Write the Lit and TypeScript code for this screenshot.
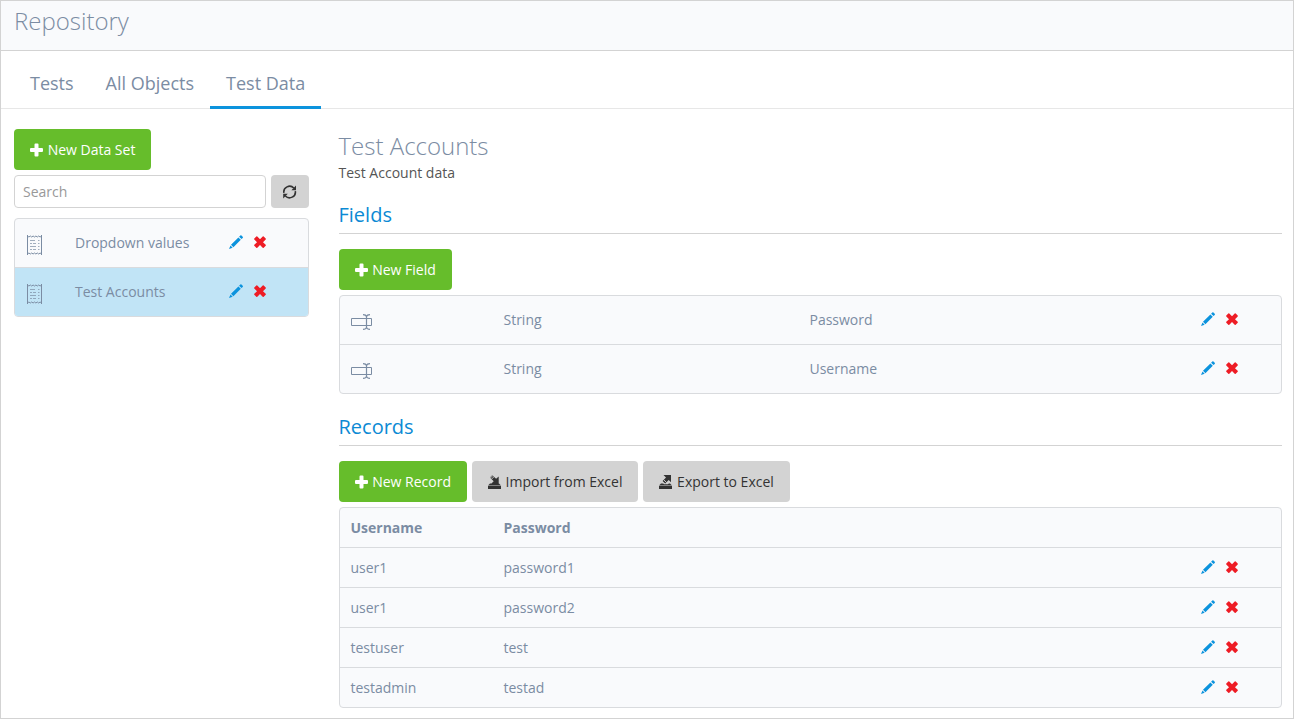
import { LitElement, html, svg, css, nothing } from "lit";
import { customElement, property, state } from "lit/decorators.js";

const icons = {
  plus: svg`<path fill="currentColor" d="M4.500 1.500q0-1 1-1h2q1 0 1 1V5h3.500q1 0 1 1v2q0 1-1 1H8.500v3.500q0 1-1 1h-2q-1 0-1-1V9H1q-1 0-1-1V6q0-1 1-1h3.500z"/>`,
  refresh: svg`<path fill="none" stroke="currentColor" stroke-width="1.600" d="M.9 7.800A5.800 5.600 0 0 1 10.800 3M12.300 6.200A5.800 5.600 0 0 1 2.400 11"/><path fill="currentColor" d="M13 .400v4.800H8.400zM.200 13.600V8.800h4.600z"/>`,
  pencil: svg`<path fill="currentColor" d="M11.300.500q.600-.600 1.200 0l1.200 1.200q.600.600 0 1.200l-1.200 1.200L10.100 1.700zM9.400 2.400l2.400 2.400-7.400 7.400L2 9.800zM1.500 10.500l2.200 2.200L0 14z"/>`,
  remove: svg`<path fill="currentColor" d="M1.300 3.500l2-2q.500-.400 1 0L7 4.200l2.700-2.700q.500-.400 1 0l2 2q.400.500 0 1L10 7.200l2.700 2.500q.400.500 0 1l-2 2q-.500.400-1 0L7 10.100l-2.700 2.600q-.500.400-1 0l-2-2q-.400-.500 0-1L4 7.200 1.300 4.500q-.400-.500 0-1z"/>`,
  importing: svg`<path fill="currentColor" d="M0 11h13v3H0zM2 8.500h9l2 2H0zM4.200.300l3.900 3.500L10.700 1.500v7H3.500L5.700 6.300 2 2.600z"/><path stroke="#d3d3d3" stroke-width=".900" d="M4.900 .500L2.300 3.100M6 1.700L3.500 4.200"/>`,
  exporting: svg`<path fill="currentColor" d="M0 11h13v3H0zM2 8.500h2.200l.8.700h4l.8-.7H11l2 2H0zM4.500 0H12v7.300L9.700 5 6.200 8.400 3.600 5.900 7 2.400z"/><path stroke="#d3d3d3" stroke-width=".900" d="M4.600 4.600l3 3"/>`,
};

const icon = (name: keyof typeof icons) =>
  html`<svg class="icon" viewBox="0 0 14 14" width="14" height="14" aria-hidden="true">${icons[name]}</svg>`;

const sheetIcon = html`<svg class="glyph" viewBox="0 0 15 20" width="15" height="20" aria-hidden="true">
  <path fill="none" stroke="currentColor" d="M.5 0v20M14.500 0v20M.5 1l1.400 1 1.400-1 1.400 1 1.400-1 1.400 1 1.400-1 1.400 1 1.400-1 1.400 1 1.400-1M.5 19l1.400-1 1.400 1 1.400-1 1.400 1 1.400-1 1.400 1 1.400-1 1.400 1 1.400-1 1.400 1"/>
  <path fill="none" stroke="currentColor" stroke-width=".7" d="M3 5.500h5M3 8.500h2M6 8.500h3M3 11.500h6M3 14.500h2M6 14.500h3M11 5.500h1.500M11 8.500h1.500M11 11.500h1.500M11 14.500h1.500"/>
</svg>`;

const textFieldIcon = html`<svg class="glyph" viewBox="0 0 21 16" width="21" height="16" aria-hidden="true">
  <path fill="none" stroke="currentColor" d="M.5 4.500h20v7H.5z"/>
  <path fill="none" stroke="currentColor" stroke-width="1.200" d="M15.500 2v12M12 .7q3 0 3.500 2 .5-2 3.500-2M12 15.300q3 0 3.500-2 .5 2 3.500 2"/>
</svg>`;

const shared = css`
  * { box-sizing: border-box; }
  .icon, .glyph { display: block; flex: none; }
  button { font: inherit; cursor: pointer; }
`;

@customElement("row-actions")
class RowActions extends LitElement {
  static styles = [shared, css`
    :host { display: flex; gap: 10px; padding-bottom: 2px; }
    .action { display: block; padding: 0; border: 0; background: none; }
    .edit { color: #0c93dd; }
    .delete { color: #ee1c25; }
  `];
  @property() name = "";
  render() {
    return html`
      <button class="action edit" aria-label="Edit ${this.name}">${icon("pencil")}</button>
      <button class="action delete" aria-label="Delete ${this.name}">${icon("remove")}</button>`;
  }
}

@customElement("tool-button")
class ToolButton extends LitElement {
  static styles = [shared, css`
    :host { display: inline-flex; }
    .button {
      height: 41px; padding: 0 16px; border: 0; border-radius: 4px;
      background: #d3d3d3; color: #333; white-space: nowrap;
    }
    .icon { display: inline-block; vertical-align: -2px; }
    .primary { background: #66bd2b; color: #fff; }
    .small { height: 33px; padding: 0 12px; }
  `];
  @property() icon: keyof typeof icons = "plus";
  @property() kind = "";
  @property() text = "";
  @property() hint = "";
  render() {
    return html`<button class="button ${this.kind}" aria-label=${this.hint || nothing}>${icon(this.icon)} ${this.text}</button>`;
  }
}

@customElement("app-root")
class AppRoot extends LitElement {
  static styles = [shared, css`
    :host {
      display: block; box-sizing: border-box; min-height: 100vh;
      border: 1px solid #d3d3d3; background: #fff; color: #7b8ca3;
      font: 14px/20px "Open Sans", "Noto Sans", sans-serif;
    }
    h1, h2, h3, p, ul { margin: 0; padding: 0; }
    h1, h2 { font-size: 24px; line-height: 32px; font-weight: 300; }
    .header { height: 50px; padding: 4px 13px; background: #f9fafc; border-bottom: 1px solid #d3d3d3; }
    .tabs { display: flex; padding: 8px 13px 0; border-bottom: 1px solid #e7e7e7; }
    .tab {
      height: 50px; margin-bottom: -1px; padding: 0 16px; border-bottom: 3px solid transparent;
      color: inherit; font-size: 18px; line-height: 49px; text-decoration: none;
    }
    .tab.current { border-bottom-color: #0c93dd; }
    .content {
      display: grid; grid-template-columns: repeat(12, minmax(0, 1fr)); column-gap: 30px;
      padding: 20px 11px 10px 13px;
    }
    .side { grid-column: span 3; }
    .main { grid-column: span 9; }
    .search { display: flex; gap: 5px; margin: 5px 0 10px; }
    .search-box {
      flex: 1; min-width: 0; height: 33px; padding: 0 8px; border: 1px solid #d3d3d3;
      border-radius: 4px; font: inherit; color: #555; background: #fff;
    }
    .search-box::placeholder { color: #999; opacity: 1; }
    .sets { list-style: none; border: 1px solid #d9dbde; border-radius: 4px; overflow: hidden; background: #f9fafc; }
    .set {
      display: grid; grid-template-columns: 48px minmax(0, 1fr) 79px; align-items: center;
      height: 48px; padding-left: 12px; box-sizing: content-box;
    }
    .set + .set { border-top: 1px solid #d9dbde; }
    .set.selected { background: #c1e4f6; }
    .set .glyph { margin-top: 4px; }
    .main h2 { padding: 1px 0 2px; }
    .description { color: #555; line-height: 18px; }
    .section { margin: 20px 0 15px; padding-bottom: 5px; border-bottom: 1px solid #d3d3d3; color: #0c8ad4; font-size: 20px; line-height: 26px; font-weight: 400; }
    .bar { display: flex; flex-wrap: wrap; gap: 5px; margin-bottom: 5px; }
    .grid {
      width: 100%; table-layout: fixed; border-collapse: separate; border-spacing: 0;
      border: 1px solid #d9dbde; border-radius: 4px; background: #f9fafc;
    }
    .grid th, .grid td { box-sizing: content-box; height: 39px; padding: 0 0 0 11px; text-align: left; overflow-wrap: anywhere; }
    .grid tr + tr td, .grid .records td { border-top: 1px solid #d9dbde; }
    .grid .fields td { height: 48px; }
    .fields .glyph { margin-top: 4px; }
    .first { width: 16.25%; }
    .second { width: 32.5%; }
    .last { width: 91px; }
  `];

  @state() tab = "Test Data";
  @state() selected = "Test Accounts";

  private tabs = ["Tests", "All Objects", "Test Data"];
  private sets = ["Dropdown values", "Test Accounts"];
  private fields = [["String", "Password"], ["String", "Username"]];
  private records = [["user1", "password1"], ["user1", "password2"], ["testuser", "test"], ["testadmin", "testad"]];

  render() {
    return html`
      <header class="header"><h1>Repository</h1></header>
      <nav class="tabs">
        ${this.tabs.map((t) => html`<a href="#" class="tab ${t === this.tab ? "current" : ""}"
          @click=${(e: Event) => { e.preventDefault(); this.tab = t; }}>${t}</a>`)}
      </nav>
      <div class="content">
        <aside class="side">
          <div class="bar"><tool-button kind="primary" icon="plus" text="New Data Set"></tool-button></div>
          <div class="search">
            <input class="search-box" type="text" placeholder="Search" aria-label="Search" />
            <tool-button kind="small" icon="refresh" hint="Refresh"></tool-button>
          </div>
          <ul class="sets">
            ${this.sets.map((s) => html`<li class="set ${s === this.selected ? "selected" : ""}" @click=${() => (this.selected = s)}>
              ${sheetIcon}<span>${s}</span><row-actions name=${s}></row-actions>
            </li>`)}
          </ul>
        </aside>
        <main class="main">
          <h2>Test Accounts</h2>
          <p class="description">Test Account data</p>
          <h3 class="section">Fields</h3>
          <div class="bar"><tool-button kind="primary" icon="plus" text="New Field"></tool-button></div>
          <table class="grid" aria-label="Fields">
            <colgroup><col class="first" /><col class="second" /><col /><col class="last" /></colgroup>
            <tbody class="fields">
              ${this.fields.map(([type, name]) => html`<tr>
                <td>${textFieldIcon}</td><td>${type}</td><td>${name}</td>
                <td><row-actions name=${name}></row-actions></td>
              </tr>`)}
            </tbody>
          </table>
          <h3 class="section">Records</h3>
          <div class="bar">
            <tool-button kind="primary" icon="plus" text="New Record"></tool-button>
            <tool-button icon="importing" text="Import from Excel"></tool-button>
            <tool-button icon="exporting" text="Export to Excel"></tool-button>
          </div>
          <table class="grid" aria-label="Records">
            <colgroup><col class="first" /><col /><col class="last" /></colgroup>
            <thead><tr><th>Username</th><th>Password</th><td></td></tr></thead>
            <tbody class="records">
              ${this.records.map(([user, pass]) => html`<tr>
                <td>${user}</td><td>${pass}</td>
                <td><row-actions name=${user}></row-actions></td>
              </tr>`)}
            </tbody>
          </table>
        </main>
      </div>`;
  }
}
